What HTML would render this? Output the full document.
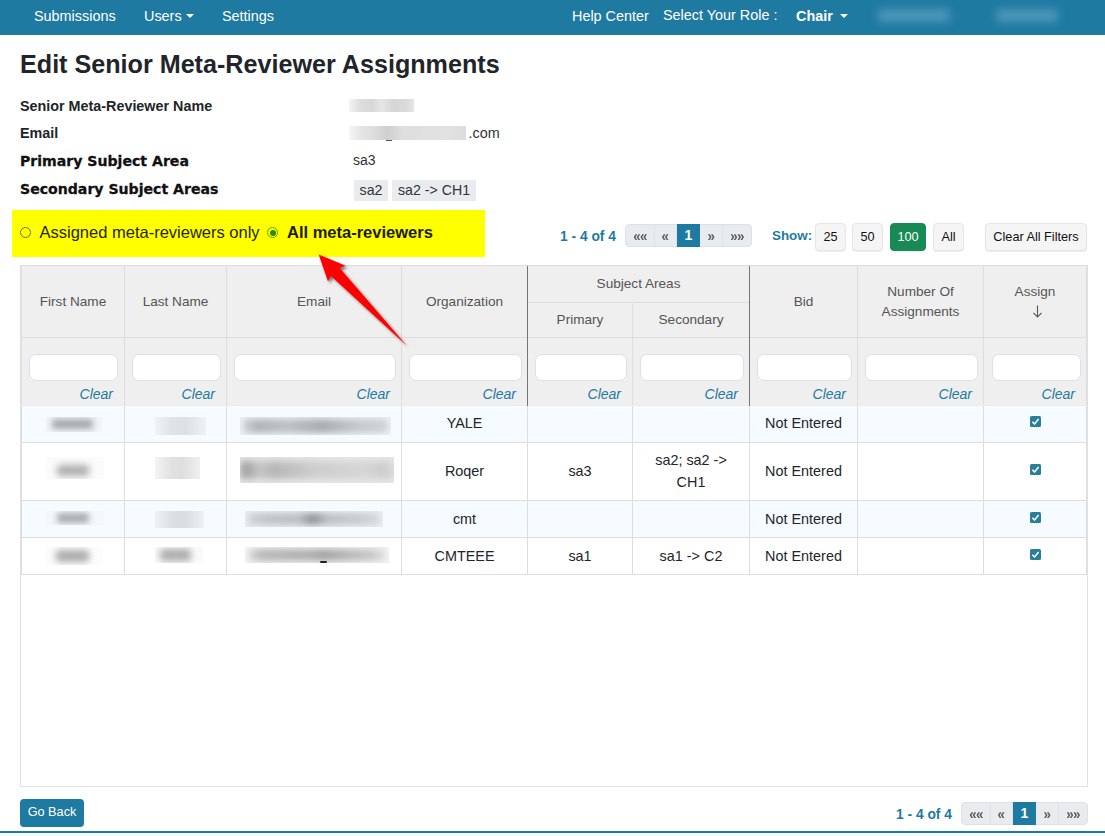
<!DOCTYPE html>
<html><head><meta charset="utf-8">
<style>
*{box-sizing:border-box}
html,body{margin:0;padding:0}
body{width:1105px;height:836px;overflow:hidden;background:#fff;font-family:"Liberation Sans",Arial,sans-serif;color:#212529;position:relative;font-size:14px}
.nav{position:absolute;left:0;top:0;width:1105px;height:35px;background:#1f7aa2;color:#fff;font-size:14.4px}
.nav span{position:absolute;top:8px;white-space:nowrap}
.caret{display:inline-block;width:0;height:0;border-left:4px solid transparent;border-right:4px solid transparent;border-top:4px solid #fff;vertical-align:middle;margin-left:4px;position:relative;top:-1px}
.blur{position:absolute;border-radius:4px;filter:blur(3px)}
h1{position:absolute;left:20px;top:48px;margin:0;font-size:25.15px;font-weight:bold;color:#212529;white-space:nowrap;line-height:32px}
.lbl{position:absolute;left:20px;font-weight:bold;font-size:14.35px;white-space:nowrap;color:#212529}
.lbl.w{font-family:"DejaVu Sans",sans-serif;font-size:14.1px;color:#111;-webkit-text-stroke:0.3px #111}
.val{position:absolute;left:352px;font-size:14.4px;white-space:nowrap;color:#333}
.tag{position:absolute;background:#e9ecef;font-size:14.2px;height:21px;line-height:20px;text-align:center;color:#333;white-space:nowrap}
.hl{position:absolute;left:12px;top:210px;width:473px;height:47px;background:#ffff00}
.radio{position:absolute;width:11px;height:11px;border-radius:50%;border:1px solid #6e6e0a;background:transparent}
.pg{position:absolute;height:23px;display:flex;border:1px solid #dee2e6;border-radius:4px;background:#e9ecef;font-size:15px;font-weight:bold;color:#5c5c5c}
.pg div{height:21px;line-height:21px;letter-spacing:-0.5px;text-align:center;border-right:1px solid #dee2e6}
.pg div:last-child{border-right:0}
.pg b{display:inline-block;transform:scaleX(.86);font-size:15.5px}
.pg .act{letter-spacing:0;background:#1f7aa2;color:#fff;font-size:14px;border-right:0;height:23px;margin-top:-1px;line-height:22px}
.cnt{position:absolute;font-weight:bold;color:#1f7aa2;font-size:13.8px;white-space:nowrap}
.btn{position:absolute;height:28px;line-height:26px;border:1px solid #e6e6e6;border-radius:4px;background:#f5f5f5;font-size:12.7px;text-align:center;color:#111;box-shadow:0 1px 1px rgba(0,0,0,.08)}
.btn.g{background:#178a55;color:#fff;border-color:#178a55}
.grid{position:absolute;left:20px;top:265px;width:1068px;height:522px;border:1px solid #dee2e6;background:#fff}
table{border-collapse:collapse;position:absolute;left:0;top:-1px;width:1066px;table-layout:fixed;font-size:14.4px}
th,td{border:1px solid #ddd;text-align:center;vertical-align:middle;padding:0;color:#212529;font-weight:normal}
thead th{background:#efefef;color:#555;font-size:13.6px}
thead th span{position:relative;top:0}
thead th.s span{top:-1px}
tr.f td{background:#efefef;height:68px;border-bottom-color:#ececec;vertical-align:top;position:relative}
.inp{position:absolute;left:7px;right:5px;top:16px;height:27px;background:#fff;border:1px solid #dde1e6;border-radius:7px}
.clr{position:absolute;right:11px;top:48px;font-style:italic;color:#1f7aa2;font-size:14px}
tr.o td{background:#f5fbfe}
tbody tr td{position:relative}
tbody tr.u td{padding-bottom:2px}
.cb{position:absolute;left:46px;width:11px;height:11px}
.rb{position:absolute;overflow:hidden}
.rb i{position:absolute;display:block;border-radius:3px}
.goback{position:absolute;left:20px;top:799px;width:64px;height:28px;background:#1f7aa2;border-radius:4px;color:#fff;font-size:12.7px;line-height:27px;text-align:center}
.foot{position:absolute;left:0;top:831px;width:1105px;height:5px;background:#f8f9fa;border-top:2px solid #1f7aa2}
.arrow{position:absolute;left:300px;top:240px;width:130px;height:120px;overflow:visible}
</style></head><body>
<div class="nav">
<span style="left:34px">Submissions</span>
<span style="left:144px">Users<i class="caret"></i></span>
<span style="left:222px">Settings</span>
<span style="left:572px">Help Center</span>
<span style="left:663px;top:7px">Select Your Role :</span>
<span style="left:796px;font-weight:bold">Chair <i class="caret" style="margin-left:3px"></i></span>
<div class="blur" style="left:878px;top:9px;width:72px;height:13px;background:#4b97b9;filter:blur(4px)"></div>
<div class="blur" style="left:996px;top:9px;width:62px;height:13px;background:#4b97b9;filter:blur(4px)"></div>
</div>
<h1>Edit Senior Meta-Reviewer Assignments</h1>
<div class="lbl" style="top:98px">Senior Meta-Reviewer Name</div>
<div class="lbl" style="top:125px">Email</div>
<div class="lbl w" style="top:153px">Primary Subject Area</div>
<div class="lbl w" style="top:181px">Secondary Subject Areas</div>
<div class="val" style="left:468.5px;top:125px">.com</div>
<div class="val" style="top:152px;left:353px;font-size:14px">sa3</div>
<div class="tag" style="left:354px;top:180px;width:34px">sa2</div>
<div class="tag" style="left:392px;top:180px;width:84px">sa2 -&gt; CH1</div>

<div class="hl"></div>
<div class="radio" style="left:20px;top:227px"></div>
<div style="position:absolute;left:39.5px;top:223px;font-size:16.5px;color:#262600;white-space:nowrap">Assigned meta-reviewers only</div>
<div class="radio" style="left:267px;top:227px;border-color:#55a010"></div>
<div style="position:absolute;left:269.5px;top:229.5px;width:6px;height:6px;border-radius:50%;background:#2e8b0a"></div>
<div style="position:absolute;left:287px;top:223px;font-size:16.5px;font-weight:bold;color:#1c1c00;white-space:nowrap">All meta-reviewers</div>

<div class="cnt" style="left:560px;top:229px">1 - 4 of 4</div>
<div class="pg" style="left:625px;top:224px;width:127px"><div style="width:29px"><b>««</b></div><div style="width:22px"><b>«</b></div><div class="act" style="width:23px">1</div><div style="width:23px"><b>»</b></div><div style="width:28px"><b>»»</b></div></div>
<div class="cnt" style="left:772px;top:228px;font-size:13.4px">Show:</div>
<div class="btn" style="left:815px;top:223px;width:31px">25</div>
<div class="btn" style="left:852px;top:223px;width:31px">50</div>
<div class="btn g" style="left:890px;top:223px;width:36px">100</div>
<div class="btn" style="left:933px;top:223px;width:31px">All</div>
<div class="btn" style="left:985px;top:223px;width:102px">Clear All Filters</div>

<div class="grid">
<table>
<colgroup><col style="width:103px"><col style="width:102px"><col style="width:175px"><col style="width:126px"><col style="width:105px"><col style="width:117px"><col style="width:108px"><col style="width:126px"><col style="width:103px"></colgroup>
<thead>
<tr style="height:37px"><th rowspan="2"><span>First Name</span></th><th rowspan="2"><span>Last Name</span></th><th rowspan="2"><span>Email</span></th><th rowspan="2"><span>Organization</span></th><th class="s" colspan="2"><span>Subject Areas</span></th><th rowspan="2"><span>Bid</span></th><th rowspan="2" style="line-height:20px"><span>Number Of<br>Assignments</span></th><th rowspan="2" style="line-height:20px"><span style="top:0">Assign<br><svg style="position:relative;left:2.5px;top:2px" width="11" height="13" viewBox="0 0 11 13"><path d="M5.5 0.5 V11.8 M1.4 7.8 L5.5 12 L9.6 7.8" stroke="#5a5a5a" stroke-width="1.15" fill="none"/></svg></span></th></tr>
<tr style="height:35px"><th class="s"><span>Primary</span></th><th class="s"><span>Secondary</span></th></tr>
</thead>
<tbody>
<tr class="f"><td><div class="inp" style="right:6px"></div><div class="clr">Clear</div></td><td><div class="inp"></div><div class="clr">Clear</div></td><td><div class="inp"></div><div class="clr">Clear</div></td><td><div class="inp"></div><div class="clr">Clear</div></td><td style="border-left-color:#777"><div class="inp"></div><div class="clr">Clear</div></td><td style="border-right-color:#777"><div class="inp"></div><div class="clr">Clear</div></td><td><div class="inp"></div><div class="clr">Clear</div></td><td><div class="inp"></div><div class="clr">Clear</div></td><td><div class="inp" style="left:8px"></div><div class="clr">Clear</div></td></tr>
<tr class="o u" style="height:37px"><td></td><td></td><td></td><td>YALE</td><td></td><td></td><td>Not Entered</td><td></td><td><svg class="cb" style="top:10px" viewBox="0 0 11 11"><rect width="11" height="11" rx="1.6" fill="#2a7f98"/><path d="M2.4 5.9 L4.6 8 L8.6 3" stroke="#fff" stroke-width="1.5" fill="none"/></svg></td></tr>
<tr class="u" style="height:58px"><td></td><td></td><td></td><td>Roqer</td><td>sa3</td><td style="line-height:22px">sa2; sa2 -&gt;<br>CH1</td><td>Not Entered</td><td></td><td><svg class="cb" style="top:21px" viewBox="0 0 11 11"><rect width="11" height="11" rx="1.6" fill="#2a7f98"/><path d="M2.4 5.9 L4.6 8 L8.6 3" stroke="#fff" stroke-width="1.5" fill="none"/></svg></td></tr>
<tr class="o" style="height:37px"><td></td><td></td><td></td><td>cmt</td><td></td><td></td><td>Not Entered</td><td></td><td><svg class="cb" style="top:11px" viewBox="0 0 11 11"><rect width="11" height="11" rx="1.6" fill="#2a7f98"/><path d="M2.4 5.9 L4.6 8 L8.6 3" stroke="#fff" stroke-width="1.5" fill="none"/></svg></td></tr>
<tr style="height:37px"><td></td><td></td><td></td><td>CMTEEE</td><td>sa1</td><td>sa1 -&gt; C2</td><td>Not Entered</td><td></td><td><svg class="cb" style="top:11px" viewBox="0 0 11 11"><rect width="11" height="11" rx="1.6" fill="#2a7f98"/><path d="M2.4 5.9 L4.6 8 L8.6 3" stroke="#fff" stroke-width="1.5" fill="none"/></svg></td></tr>
</tbody>
</table>
<div style="position:absolute;left:506px;top:0;width:1px;height:140px;background:#757575"></div><div style="position:absolute;left:728px;top:0;width:1px;height:140px;background:#757575"></div>
</div>

<!-- blurred (redacted) patches, absolute page coordinates -->
<div id="blurs">
<div class="rb" style="left:46px;top:417px;width:56px;height:15px;background:#f1f6f9"><i style="left:6px;top:2px;width:41px;height:10px;background:#a3a8ad;filter:blur(3px)"></i></div>
<div class="rb" style="left:155px;top:417px;width:51px;height:18px;background:linear-gradient(90deg,#f0f4f6,#e0e4e7 30%,#dde1e4 60%,#eef2f4)"></div>
<div class="rb" style="left:240px;top:417px;width:151px;height:18px;background:#eef2f5"><i style="left:3px;top:2px;width:145px;height:14px;background:linear-gradient(90deg,#cfd3d6 0%,#b0b5ba 10%,#bec2c6 30%,#a8adb2 55%,#c2c6ca 75%,#d0d4d7 100%);filter:blur(3px)"></i></div>
<div class="rb" style="left:46px;top:457px;width:58px;height:22px;background:#fbfbfb"><i style="left:11px;top:8px;width:32px;height:11px;background:#adadad;filter:blur(3.5px)"></i></div>
<div class="rb" style="left:155px;top:457px;width:45px;height:22px;background:linear-gradient(90deg,#f4f4f4,#e2e2e2 35%,#dedede 60%,#f0f0f0)"></div>
<div class="rb" style="left:240px;top:457px;width:154px;height:26px;background:#e8e8e8"><i style="left:0px;top:4px;width:156px;height:18px;background:linear-gradient(90deg,#a8a8a8 0%,#a4a4a4 5%,#c6c6c6 12%,#b6b6b6 22%,#cccccc 45%,#d6d6d6 80%,#cccccc 92%,#dcdcdc 100%);filter:blur(3.5px)"></i></div>
<div class="rb" style="left:46px;top:511px;width:58px;height:14px;background:#f3f8fb"><i style="left:11px;top:2px;width:32px;height:10px;background:#a6abb0;filter:blur(3px)"></i></div>
<div class="rb" style="left:155px;top:511px;width:49px;height:17px;background:linear-gradient(90deg,#eef2f5,#dce0e3 35%,#d9dde0 60%,#edf1f4)"></div>
<div class="rb" style="left:245px;top:511px;width:138px;height:16px;background:#ebeff2"><i style="left:3px;top:2px;width:132px;height:12px;background:linear-gradient(90deg,#d0d4d7 0%,#c0c4c8 15%,#bcc0c4 38%,#8f949a 49%,#bcc0c4 60%,#c8ccd0 85%,#d6dadd 100%);filter:blur(3px)"></i></div>
<div class="rb" style="left:46px;top:547px;width:56px;height:18px;background:#fcfcfc"><i style="left:10px;top:3px;width:33px;height:12px;background:#acacac;filter:blur(3.5px)"></i></div>
<div class="rb" style="left:155px;top:547px;width:48px;height:16px;background:#fafafa"><i style="left:5px;top:2px;width:31px;height:12px;background:#acacac;filter:blur(3.5px)"></i></div>
<div class="rb" style="left:245px;top:547px;width:144px;height:16px;background:#f3f3f3"><i style="left:4px;top:2px;width:136px;height:12px;background:linear-gradient(90deg,#d6d6d6 0%,#b8b8b8 10%,#b0b0b0 45%,#a4a4a4 55%,#bababa 75%,#c8c8c8 90%,#dedede 100%);filter:blur(3px)"></i><i style="left:75px;top:14px;width:7px;height:2px;background:#222;filter:blur(0.6px)"></i></div>
<div class="rb" style="left:349px;top:99px;width:65px;height:13px;background:linear-gradient(90deg,#f4f4f4 0%,#dedede 16%,#d8d8d8 36%,#e6e6e6 50%,#d6d6d6 68%,#dadada 88%,#e6e6e6 100%)"></div>
<div class="rb" style="left:349px;top:126px;width:117px;height:14px;background:linear-gradient(90deg,#f6f6f6 0%,#e6e6e6 10%,#dcdcdc 22%,#cfcfcf 33%,#dedede 45%,#e2e2e2 85%,#dcdcdc 100%)"></div>
<div style="position:absolute;left:386px;top:140px;width:6px;height:1px;background:#555"></div>
</div>

<svg class="arrow" viewBox="0 0 130 120">
<defs><filter id="sh" x="-20%" y="-20%" width="150%" height="150%"><feGaussianBlur in="SourceAlpha" stdDeviation="1.6"/><feOffset dx="1.5" dy="2"/><feComponentTransfer><feFuncA type="linear" slope="0.55"/></feComponentTransfer><feMerge><feMergeNode/><feMergeNode in="SourceGraphic"/></feMerge></filter></defs>
<polygon filter="url(#sh)" fill="#ff0000" points="18.7,14.4 45.6,25.8 39.6,28 106.6,105.4 31,36 28,41.6"/>
</svg>

<div class="goback">Go Back</div>
<div class="cnt" style="left:896px;top:807px">1 - 4 of 4</div>
<div class="pg" style="left:961px;top:802px;width:127px"><div style="width:29px"><b>««</b></div><div style="width:22px"><b>«</b></div><div class="act" style="width:23px">1</div><div style="width:23px"><b>»</b></div><div style="width:28px"><b>»»</b></div></div>
<div class="foot"></div>
</body></html>
